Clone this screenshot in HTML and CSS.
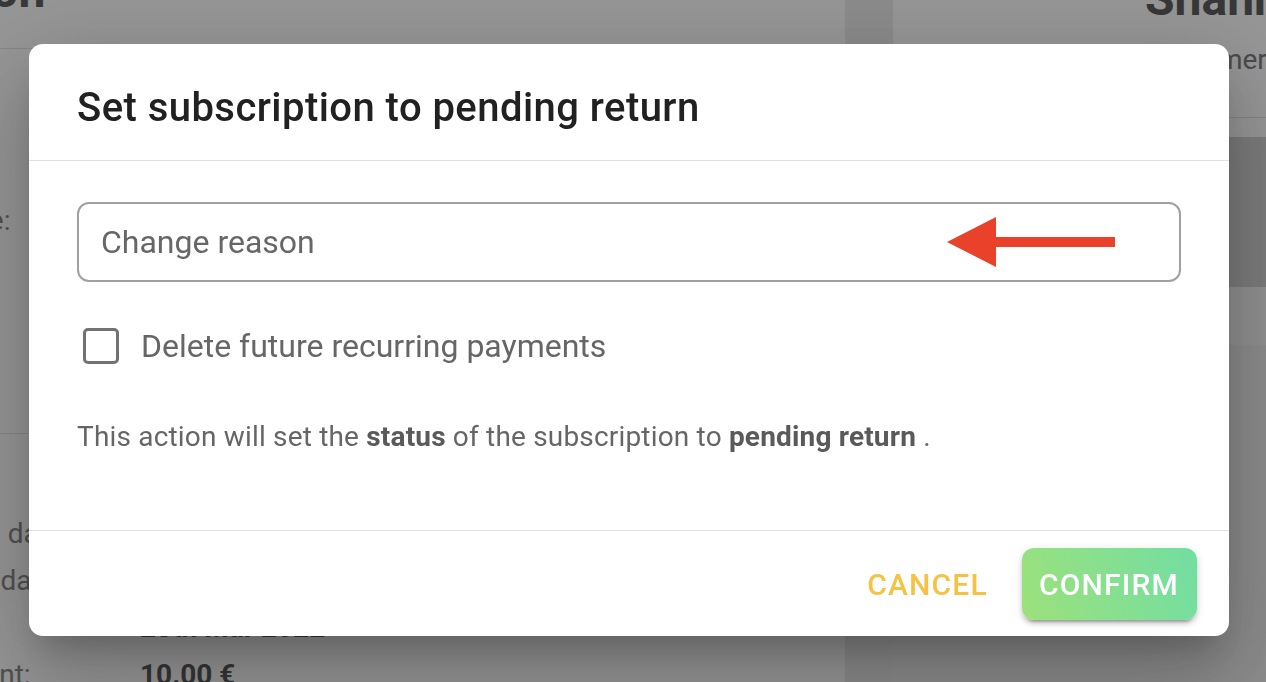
FILE: index.html
```html
<!DOCTYPE html>
<html lang="en">
<head>
<meta charset="utf-8">
<title>Set subscription to pending return</title>
<link rel="stylesheet" href="styles.css">
</head>
<body>
<div class="page">
  <section class="panel panel-left">
    <header class="left-head">
      <h1 class="left-title">Subscription</h1>
    </header>
    <div class="details details-top">
      <div class="row"><span class="label">Frame:</span><span class="value">Premium bike</span></div>
    </div>
    <div class="details details-bottom">
      <div class="row"><span class="label">Billing date:</span><span class="value">28th Feb 2022</span></div>
      <div class="row"><span class="label">Order date:</span><span class="value">28th Feb 2022</span></div>
      <div class="row"><span class="label">Due:</span><span class="value">28th Mar 2022</span></div>
      <div class="row"><span class="label">Amount:</span><span class="value">10.00 €</span></div>
    </div>
  </section>
  <div class="gutter"></div>
  <section class="panel panel-right">
    <div class="right-card">
      <header class="right-head">
        <h1 class="right-title">Shannon Walker</h1>
        <p class="right-sub">Customer</p>
      </header>
      <div class="right-media"></div>
      <div class="right-foot"></div>
    </div>
  </section>
</div>

<div class="backdrop"></div>

<div class="dialog-wrap">
  <div class="dialog" role="dialog" aria-labelledby="dlg-title">
    <header class="dialog-head">
      <h2 id="dlg-title" class="dialog-title">Set subscription to pending return</h2>
    </header>
    <div class="dialog-body">
      <div class="field">
        <input class="field-input" type="text" placeholder="Change reason">
        <svg class="annot-arrow" width="172" height="56" viewBox="0 0 172 56" aria-hidden="true">
          <polygon points="2,28 51,3 51,23 170,23 170,33 51,33 51,53" fill="#e9412a"/>
        </svg>
      </div>
      <label class="check-row">
        <span class="check-box"></span>
        <span class="check-label">Delete future recurring payments</span>
      </label>
      <p class="note">This action will set the <strong>status</strong> of the subscription to <strong>pending return</strong> .</p>
    </div>
    <footer class="dialog-actions">
      <button class="btn btn-text" type="button">Cancel</button>
      <button class="btn btn-confirm" type="button">Confirm</button>
    </footer>
  </div>
</div>
</body>
</html>
```

FILE: styles.css
```css
* { box-sizing: border-box; }

html, body {
  margin: 0;
  padding: 0;
  height: 100%;
  overflow: hidden;
}

body {
  font-family: Roboto, "Liberation Sans", Arial, sans-serif;
  background: #eeeeee;
  color: #212121;
}

/* ---------- background page ---------- */
.page {
  display: flex;
  margin: -30px 0 0 -200px;
  height: 760px;
}

.panel-left {
  width: 1045px;
  flex: none;
  background: #ffffff;
}

.left-head {
  padding: 0 0 33px 11px;
  border-bottom: 1px solid #e2e2e2;
}

.left-title {
  margin: -3px 0 0 -39px;
  font-size: 48px;
  line-height: 48px;
  font-weight: 700;
  color: #5e5e5e;
  white-space: nowrap;
}

.details {
  padding-left: 125px;
}

.details-top {
  padding-top: 148px;
  height: 385px;
  border-bottom: 1px solid #e2e2e2;
}

.details-bottom {
  padding-top: 76px;
}

.row {
  display: grid;
  grid-template-columns: 215px auto;
  height: 47px;
  align-items: center;
  font-size: 28px;
}

.label {
  color: #8a8a8a;
  white-space: nowrap;
}

.value {
  color: #5a5a5a;
  font-weight: 700;
  white-space: nowrap;
}

.gutter {
  width: 48px;
  flex: none;
  background: #ececec;
}

.panel-right {
  flex: 1;
}

.right-card {
  background: #ffffff;
}

.right-head {
  padding: 5px 0 0 0;
  border-bottom: 1px solid #e2e2e2;
}

.right-title {
  margin: 0;
  padding-left: 252px;
  font-size: 48px;
  line-height: 48px;
  font-weight: 700;
  color: #5e5e5e;
  white-space: nowrap;
}

.right-sub {
  margin: 19px 0 0;
  padding: 0 0 39px 252px;
  font-size: 28px;
  line-height: 36px;
  color: #7e7e7e;
  white-space: nowrap;
}

.right-media {
  margin-top: 19px;
  height: 150px;
  background: #d2d2d2;
}

.right-foot {
  height: 58px;
  background: #f6f6f6;
}

/* ---------- overlay ---------- */
.backdrop {
  position: fixed;
  inset: 0;
  background: rgba(0, 0, 0, 0.41);
}

.dialog-wrap {
  position: fixed;
  inset: 0;
  display: flex;
  align-items: flex-start;
  justify-content: flex-start;
  padding: 44px 0 0 29px;
}

.dialog {
  width: 1200px;
  background: #ffffff;
  border-radius: 14px;
  box-shadow:
    0 22px 30px -14px rgba(0, 0, 0, 0.2),
    0 48px 76px 6px rgba(0, 0, 0, 0.14),
    0 18px 92px 16px rgba(0, 0, 0, 0.12);
}

.dialog-head {
  padding: 32px 48px 20px;
  border-bottom: 1px solid #e0e0e0;
}

.dialog-title {
  margin: 0;
  font-size: 40px;
  line-height: 64px;
  font-weight: 500;
  color: #212121;
  letter-spacing: 0.45px;
}

.dialog-body {
  padding: 41px 48px 72px;
  border-bottom: 1px solid #e0e0e0;
}

.field {
  position: relative;
}

.field-input {
  display: block;
  width: 100%;
  height: 80px;
  margin: 0;
  padding: 0 22px;
  border: 2px solid #a0a0a0;
  border-radius: 12px;
  font-family: Roboto, "Liberation Sans", Arial, sans-serif;
  font-size: 32px;
  color: #212121;
  background: #ffffff;
  outline: none;
}

.field-input::placeholder {
  color: #676767;
  opacity: 1;
}

.annot-arrow {
  position: absolute;
  left: 868px;
  top: 12px;
}

.check-row {
  display: flex;
  align-items: center;
  height: 48px;
  margin-top: 40px;
}

.check-box {
  width: 36px;
  height: 36px;
  margin-left: 6px;
  border: 3.5px solid #727272;
  border-radius: 5px;
  flex: none;
}

.check-label {
  margin-left: 22px;
  font-size: 32px;
  color: #666666;
}

.note {
  margin: 46px 0 0;
  font-size: 28px;
  line-height: 42px;
  letter-spacing: 0.18px;
  color: #666666;
}

.note strong {
  font-weight: 700;
  color: #5a5a5a;
}

.dialog-actions {
  display: flex;
  justify-content: flex-end;
  align-items: center;
  gap: 18px;
  padding: 17px 32px 16px;
}

.btn {
  height: 72px;
  border: 0;
  margin: 0;
  font-family: Roboto, "Liberation Sans", Arial, sans-serif;
  font-size: 30px;
  font-weight: 500;
  letter-spacing: 1.2px;
  text-transform: uppercase;
  border-radius: 12px;
  cursor: pointer;
}

.btn-text {
  background: transparent;
  color: #f5c243;
  padding: 0 16px;
}

.btn-confirm {
  color: #ffffff;
  padding: 0 18px 0 17px;
  background: linear-gradient(70deg, #9de17b 0%, #71dea3 100%);
  box-shadow:
    0 6px 2px -4px rgba(0, 0, 0, 0.2),
    0 4px 4px 0 rgba(0, 0, 0, 0.14),
    0 2px 10px 0 rgba(0, 0, 0, 0.12);
}
```
